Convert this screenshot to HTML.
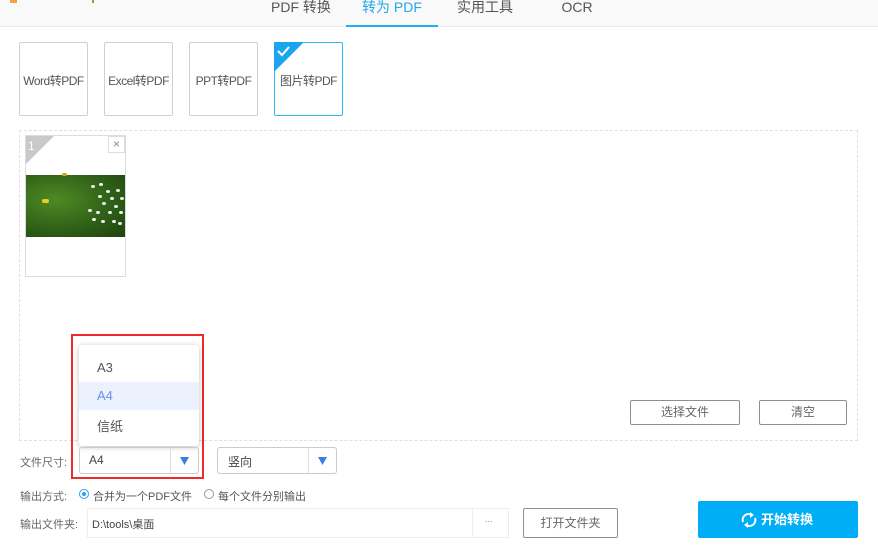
<!DOCTYPE html>
<html><head><meta charset="utf-8"><style>
*{margin:0;padding:0;box-sizing:border-box}
body{width:878px;height:553px;background:#fff;position:relative;overflow:hidden;font-family:"Liberation Sans","Noto Sans CJK SC",sans-serif;color:#555;font-size:12px}
.abs{position:absolute}
.top{left:0;top:0;width:878px;height:27px;background:#f9f9f9;border-bottom:1px solid #e8e8e8}
.tab{top:0;height:27px;font-size:14px;color:#555;line-height:14px;text-align:center}
.card{top:42px;width:69px;height:74px;border:1px solid #d0d0d0;border-radius:2px;font-size:12px;color:#555;text-align:center;line-height:76px;letter-spacing:-0.5px}
.btn{border:1px solid #8e8e8e;border-radius:2px;background:#fff;text-align:center;color:#666;font-size:12px}
.lbl{left:20px;font-size:11px;color:#666}
.d{position:absolute;width:4px;height:3px;background:#f2f2f2;border-radius:50%}
</style></head><body>
<div class="abs top"></div>
<div class="abs" style="left:10px;top:0;width:7px;height:3px;background:#f5a33c"></div>
<div class="abs" style="left:92px;top:0;width:2px;height:3px;background:#6ab04c"></div>
<div class="abs tab" style="left:266px;width:70px">PDF 转换</div>
<div class="abs tab" style="left:346px;width:92px;color:#1fa8e6">转为 PDF</div>
<div class="abs" style="left:346px;top:25px;width:92px;height:2px;background:#1fb0ee"></div>
<div class="abs tab" style="left:455px;width:60px">实用工具</div>
<div class="abs tab" style="left:560px;width:34px">OCR</div>

<div class="abs card" style="left:19px">Word转PDF</div>
<div class="abs card" style="left:104px">Excel转PDF</div>
<div class="abs card" style="left:189px">PPT转PDF</div>
<div class="abs card" style="left:274px;border-color:#36b7f5">图片转PDF</div>
<svg class="abs" style="left:274px;top:42px" width="30" height="30"><path d="M0 0H30L0 30Z" fill="#1aa6ee"/><path d="M4 9l4 4 7-8" stroke="#fff" stroke-width="2" fill="none"/></svg>

<div class="abs" style="left:19px;top:130px;width:839px;height:311px;border:1px dashed #e0e0e0"></div>
<div class="abs" style="left:25px;top:135px;width:101px;height:142px;border:1px solid #dcdcdc;background:#fff"></div>
<svg class="abs" style="left:26px;top:136px" width="28" height="28"><path d="M0 0H28L0 28Z" fill="#c9c9c9"/><text x="2" y="14" fill="#fff" font-size="12" font-family="Liberation Sans">1</text></svg>
<div class="abs" style="left:108px;top:136px;width:17px;height:17px;border:1px solid #ddd;color:#888;font-size:12px;text-align:center;line-height:15px">×</div>
<div class="abs" style="left:26px;top:175px;width:99px;height:62px;background:radial-gradient(ellipse at 30% 40%,#4f8a24,#2d5e16 60%,#1f4210)">
<div class="abs" style="left:16px;top:24px;width:7px;height:4px;background:#e8d020;border-radius:2px"></div>
<div class="abs" style="left:36px;top:-2px;width:5px;height:3px;background:#c8b020;border-radius:2px"></div>
<div class="d" style="left:65px;top:10px"></div><div class="d" style="left:62px;top:34px"></div>
<div class="d" style="left:73px;top:8px"></div><div class="d" style="left:80px;top:15px"></div>
<div class="d" style="left:90px;top:14px"></div><div class="d" style="left:94px;top:22px"></div>
<div class="d" style="left:72px;top:20px"></div><div class="d" style="left:84px;top:22px"></div>
<div class="d" style="left:76px;top:27px"></div><div class="d" style="left:88px;top:30px"></div>
<div class="d" style="left:70px;top:36px"></div><div class="d" style="left:82px;top:36px"></div>
<div class="d" style="left:93px;top:36px"></div><div class="d" style="left:66px;top:43px"></div>
<div class="d" style="left:75px;top:45px"></div><div class="d" style="left:86px;top:45px"></div>
<div class="d" style="left:92px;top:47px"></div>
</div>

<div class="abs btn" style="left:630px;top:400px;width:110px;height:25px;line-height:23px">选择文件</div>
<div class="abs btn" style="left:759px;top:400px;width:88px;height:25px;line-height:23px">清空</div>

<div class="abs" style="left:71px;top:334px;width:133px;height:145px;border:2px solid #ee2a2a"></div>
<div class="abs" style="left:79px;top:345px;width:120px;height:101px;background:#fff;border-radius:3px;box-shadow:0 1px 6px rgba(0,0,0,.25)"></div>
<div class="abs" style="left:79px;top:382px;width:120px;height:28px;background:#ebf1fd"></div>
<div class="abs" style="left:97px;top:360px;font-size:13px;color:#555">A3</div>
<div class="abs" style="left:97px;top:388px;font-size:13px;color:#6b8fe8">A4</div>
<div class="abs" style="left:97px;top:416px;font-size:13px;color:#555">信纸</div>

<div class="abs lbl" style="top:454px">文件尺寸:</div>
<div class="abs" style="left:79px;top:447px;width:120px;height:27px;border:1px solid #ccc;border-radius:3px"></div>
<div class="abs" style="left:170px;top:448px;width:1px;height:25px;background:#ddd"></div>
<div class="abs" style="left:89px;top:453px;font-size:12px;color:#444">A4</div>
<svg class="abs" style="left:180px;top:457px" width="9" height="8"><path d="M0 0H9L4.5 8Z" fill="#3d7fe0"/></svg>
<div class="abs" style="left:217px;top:447px;width:120px;height:27px;border:1px solid #ccc;border-radius:3px"></div>
<div class="abs" style="left:308px;top:448px;width:1px;height:25px;background:#ddd"></div>
<div class="abs" style="left:228px;top:453px;font-size:12px;color:#444">竖向</div>
<svg class="abs" style="left:318px;top:457px" width="9" height="8"><path d="M0 0H9L4.5 8Z" fill="#3d7fe0"/></svg>

<div class="abs lbl" style="top:488px">输出方式:</div>
<div class="abs" style="left:79px;top:489px;width:10px;height:10px;border:1px solid #29a3ee;border-radius:50%"></div>
<div class="abs" style="left:82px;top:492px;width:4px;height:4px;background:#29a3ee;border-radius:50%"></div>
<div class="abs" style="left:93px;top:488px;font-size:11px;color:#555">合并为一个PDF文件</div>
<div class="abs" style="left:204px;top:489px;width:10px;height:10px;border:1px solid #999;border-radius:50%"></div>
<div class="abs" style="left:218px;top:488px;font-size:11px;color:#555">每个文件分别输出</div>

<div class="abs lbl" style="top:516px">输出文件夹:</div>
<div class="abs" style="left:87px;top:508px;width:422px;height:30px;border:1px solid #eee"></div>
<div class="abs" style="left:472px;top:509px;width:1px;height:28px;background:#eee"></div>
<div class="abs" style="left:92px;top:516px;font-size:11px;color:#444">D:\tools\桌面</div>
<div class="abs" style="left:485px;top:514px;font-size:9px;color:#888">...</div>
<div class="abs btn" style="left:523px;top:508px;width:95px;height:30px;line-height:28px">打开文件夹</div>
<div class="abs" style="left:698px;top:501px;width:160px;height:37px;background:#00aef5;border-radius:2px;color:#fff;font-size:13px;font-weight:bold;line-height:37px;text-align:center;padding-left:18px">开始转换</div>
<svg class="abs" style="left:740px;top:511px" width="18" height="18" viewBox="0 0 18 18"><path d="M3 11A6 6 0 0 1 12 4M15 7A6 6 0 0 1 6 14" stroke="#fff" stroke-width="2" fill="none"/><path d="M10 1l4 3-4 3Z M8 17l-4-3 4-3Z" fill="#fff"/></svg>
</body></html>
